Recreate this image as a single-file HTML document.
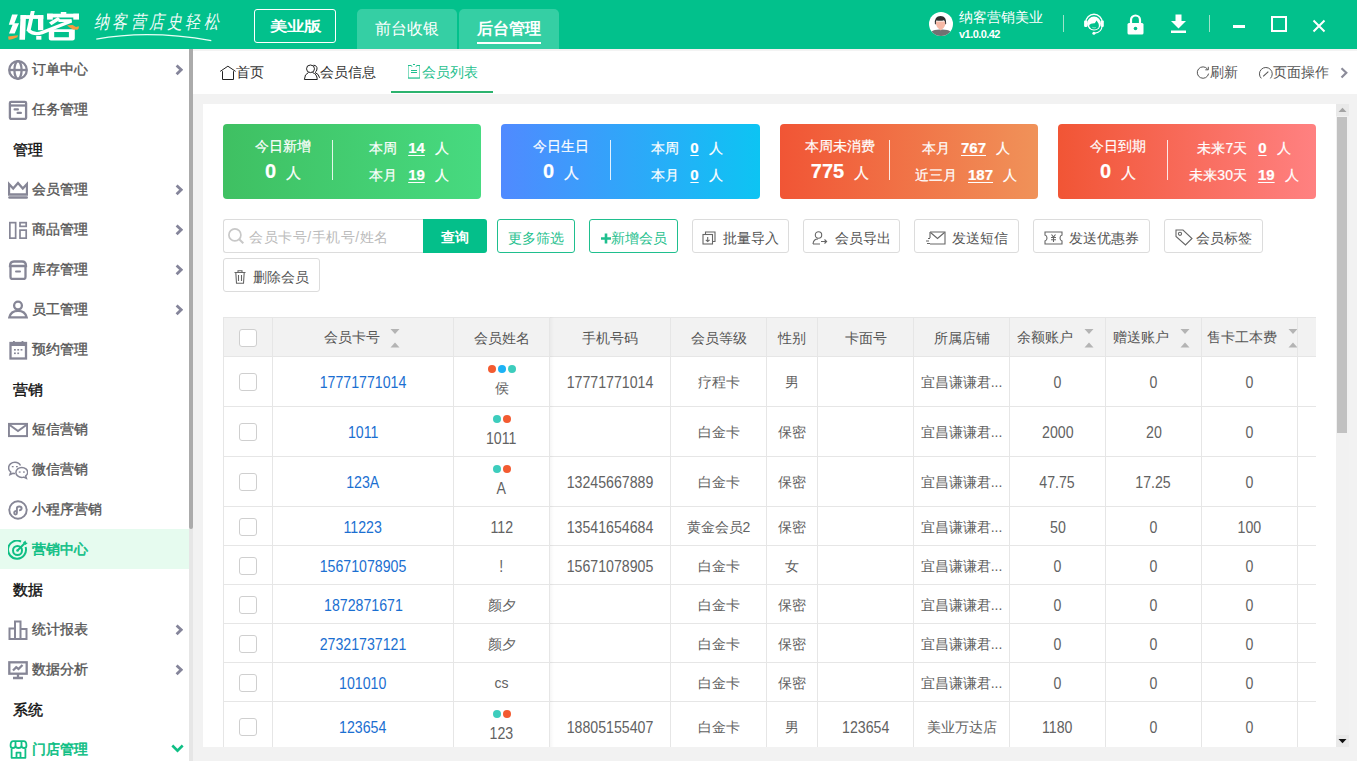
<!DOCTYPE html>
<html><head><meta charset="utf-8">
<style>
*{box-sizing:border-box;margin:0;padding:0}
html,body{width:1357px;height:761px;overflow:hidden;background:#f2f2f2;font-family:"Liberation Sans",sans-serif;font-size:14px;color:#333}
.a{position:absolute}
#hdr{position:absolute;left:0;top:0;width:1357px;height:49px;background:#02c18c}
.htab{position:absolute;top:9px;height:40px;width:100px;background:#35cfa4;border-radius:5px 5px 0 0;color:#fff;font-size:16px;text-align:center;line-height:20px;padding-top:10px}
#side{position:absolute;left:0;top:49px;width:189px;height:712px;background:#fff}
#sscroll{position:absolute;left:189px;top:49px;width:4px;height:712px;background:#e6e6e6}
#sthumb{position:absolute;left:189px;top:49px;width:4px;height:480px;background:#ababab;border-radius:0 0 2px 2px}
.si{position:absolute;left:0;width:189px;height:40px}
.si .t{position:absolute;left:32px;top:0;line-height:40px;font-size:14px;color:#555;-webkit-text-stroke:0.35px #555}
.si .ic{position:absolute;left:8px;top:11px;width:20px;height:20px}
.si .ch{position:absolute;left:175px;top:15px;width:8px;height:12px}
.si.act{background:#e6fbef}.si.act .t,.si.grn .t{color:#0fbf85;-webkit-text-stroke:0.6px #0fbf85}
.sh{position:absolute;left:13px;padding-top:1px;width:150px;height:40px;line-height:40px;font-size:15px;color:#111;-webkit-text-stroke:0.4px #111}
#tabs{position:absolute;left:193px;top:49px;width:1164px;height:45px;background:#fff;border-top:1px solid #f6f0f2;box-shadow:inset 0 1px 0 #f3f3f3}
#panel{position:absolute;left:203px;top:104px;width:1133px;height:643px;background:#fff;overflow:hidden}
.card{position:absolute;top:20px;height:75px;width:258px;border-radius:4px;color:#fff;-webkit-text-stroke:0.2px #fff}
.ct{position:absolute;left:0;width:120px;top:13px;text-align:center;font-size:14px;line-height:18px}
.cn{position:absolute;left:0;width:120px;top:35px;text-align:center;line-height:24px}
.cn b{font-size:20px;font-weight:bold}.cn span{font-size:15px;margin-left:10px}
.cd{position:absolute;left:109px;top:16px;width:1px;height:40px;background:rgba(255,255,255,.85)}
.cr{position:absolute;left:110px;width:152px;margin-top:1px;text-align:center;font-size:14px;line-height:18px}
.cr u{font-weight:bold;font-size:15px;margin:0 10px 0 11px;text-decoration-thickness:1px;text-underline-offset:2px}
.hl{left:0;width:1100px;height:1px;background:#e6e6e6}
.vl{top:0;width:1px;height:440px;background:#e6e6e6}
.th,.td{text-align:center;font-size:14px;color:#626262;white-space:nowrap;overflow:hidden}
.th{color:#555}
.lk{color:#1b6fd1}
.cb{display:inline-block;width:18px;height:18px;border:1px solid #cfcfcf;border-radius:3px;background:#fff;vertical-align:middle}
.dots{height:10px;margin-top:8px;font-size:0;line-height:0}
.dots i{display:inline-block;width:8px;height:8px;border-radius:50%;margin:0 1px}
.nm{line-height:18px;margin-top:4px}
.num{display:inline-block;font-size:16px;transform:scaleX(.885);line-height:normal;vertical-align:-1px}
.srt{display:block}
.btn{position:absolute;top:115px;height:34px;border:1px solid #dcdcdc;border-radius:3px;color:#555;font-size:14px;line-height:32px;padding-top:2px;background:#fff}
.gbtn{border-color:#1fbf8e;color:#1fbf8e}
</style></head><body>

<div id="hdr">
  <!-- logo -->
  <svg class="a" style="left:0;top:0" width="90" height="48" viewBox="0 0 90 48">
    <g fill="#fff">
      <path d="M12.1,14.4 H17.8 L14.4,23.2 H19 L14.7,33.5 H9 L12.6,24.8 H8.8 Z"/>
      <path d="M20.6,15.1 H26 L25,39.7 H19.4 Z"/>
      <path d="M20.6,15.1 H43.3 V18.9 H20.6 Z"/>
      <path d="M38,15.1 H43.3 V30.2 H38 Z"/>
      <path d="M30.8,11 H34.8 L30.5,31 H26.5 Z"/>
      <rect x="36.2" y="35.9" width="5.2" height="3.8"/>
      <rect x="60.8" y="12" width="5.5" height="3"/>
      <rect x="47.1" y="13.7" width="31.9" height="3.8"/>
      <rect x="47.1" y="13.7" width="5.7" height="5.9"/>
      <rect x="73.3" y="13.7" width="5.7" height="5.9"/>
      <path d="M49,22.6 L58,17 L60.4,19.5 L51.4,25.2 Z"/>
      <path d="M58.4,19.2 H71.7 V22 H58.4 Z"/>
      <path d="M48.8,29.3 H74.8 V38.5 Q74.8,40.6 72.5,40.6 H51 Q48.8,40.6 48.8,38.5 Z M54.2,32.1 V37.3 H68.9 V32.1 Z" fill-rule="evenodd"/>
    </g>
    <path d="M71.5,21 L42,32.6 Q34.5,35.4 28.3,30.4" stroke="#fff" stroke-width="3.3" fill="none"/>
    <g fill="#f59a3e">
      <path d="M8.1,36.4 L18,35.3 L17.4,37.3 L12,39.3 L8.6,39.8 Z"/>
      <path d="M67,25.3 L72.6,25 L76,26.9 L78.8,26.2 L78.8,28.3 L77.4,29.8 L73.1,29.5 L68.9,26.9 Z"/>
    </g>
  </svg>
  <!-- slogan -->
  <div class="a" style="left:94px;top:10px;font-family:'Liberation Serif',serif;font-style:italic;color:#fff;font-size:15px;letter-spacing:3.3px;line-height:20px;transform:scaleY(1.22);transform-origin:0 0;opacity:.95">纳客营店史轻松</div>
  <svg class="a" style="left:93px;top:30px" width="130" height="12"><path d="M3.3,9.2 Q55,-0.5 118.3,10.6" stroke="#e8fff6" stroke-width="1.3" fill="none"/></svg>
  <!-- 美业版 -->
  <div class="a" style="left:254px;top:9px;width:82px;height:34px;border:1px solid #fff;border-radius:3px;color:#fff;font-size:17px;font-weight:bold;text-align:center;line-height:31px"><div style="transform:scaleY(.8);transform-origin:50% 60%">美业版</div></div>
  <div class="htab" style="left:357px">前台收银</div>
  <div class="htab" style="left:459px;font-weight:bold"><span style="border-bottom:2px solid #fff;padding-bottom:5px">后台管理</span></div>
  <!-- user -->
  <svg class="a" style="left:929px;top:12px" width="24" height="24" viewBox="0 0 24 24">
    <circle cx="12" cy="12" r="12" fill="#fff"/>
    <clipPath id="cc"><circle cx="12" cy="12" r="12"/></clipPath>
    <g clip-path="url(#cc)">
      <path d="M3,19.2 Q5,17.6 10.5,17.6 H13.5 Q19,17.6 21,19.2 V25 H3 Z" fill="#727272"/>
      <path d="M6.8,9.5 Q6.7,15.5 10.5,17.2 L11.8,18.6 L13,17.2 Q16.6,15.5 16.6,9.5 Z" fill="#f6b9a6"/>
      <path d="M5.9,12 Q5.2,4 11.6,4 Q17.6,4 17.2,11.8 L16.3,12.5 Q16.4,9 15,8.3 Q12,9.2 7.2,8.5 Q6.8,10 6.9,12.5 Z" fill="#2f2f2f"/>
    </g>
  </svg>
  <div class="a" style="left:959px;top:9px;color:#fff;font-size:14px;line-height:16px">纳客营销美业</div>
  <div class="a" style="left:959px;top:28px;color:#fff;font-size:11px;font-weight:bold;line-height:13px;letter-spacing:-0.55px">v1.0.0.42</div>
  <div class="a" style="left:1063px;top:15px;width:1px;height:17px;background:#9ee3c9"></div>
  <!-- headset -->
  <svg class="a" style="left:1083px;top:12px" width="22" height="23" viewBox="0 0 22 23">
    <path d="M2.7,10.5 A8.3,8.3 0 0 1 19.3,10.5" stroke="#fff" stroke-width="1.4" fill="none"/>
    <rect x="1.1" y="8.6" width="3.3" height="6.3" rx="0.8" fill="#fff"/>
    <rect x="17.8" y="8.6" width="3" height="6.3" rx="0.8" fill="#fff"/>
    <circle cx="11" cy="11.6" r="7" fill="#fff"/>
    <path d="M6.3,13 Q7.5,11 11.8,11.2 L13.6,8.6 L15.6,11.8 Q16.4,14.2 15.3,16 Q13.3,17.6 11,17.5 Q7.4,17.3 6.3,14.6 Z" fill="#02c18c"/>
    <path d="M9.3,15.3 Q11,16.3 12.8,15.5" stroke="#fff" stroke-width="0.7" fill="none" opacity=".7"/>
    <path d="M19,14.5 Q18.6,20.3 11.5,21.1" stroke="#fff" stroke-width="1.2" fill="none"/>
    <circle cx="10.9" cy="21.2" r="1.5" fill="#fff"/>
  </svg>
  <!-- lock -->
  <svg class="a" style="left:1127px;top:14px" width="17" height="21" viewBox="0 0 17 21">
    <path d="M4,9 V6 A4.5,4.5 0 0 1 13,6 V9" stroke="#fff" stroke-width="2.2" fill="none"/>
    <rect x="0.5" y="9" width="16" height="11.5" rx="1.5" fill="#fff"/>
    <circle cx="8.5" cy="14.5" r="1.8" fill="#03bf8b"/>
  </svg>
  <!-- download -->
  <svg class="a" style="left:1170px;top:14px" width="17" height="20" viewBox="0 0 17 20">
    <rect x="5.5" y="0.5" width="6" height="7" fill="#fff"/>
    <path d="M1,7 H16 L8.5,14.5 Z" fill="#fff"/>
    <rect x="1" y="16.5" width="15" height="2.5" fill="#fff"/>
  </svg>
  <div class="a" style="left:1209px;top:15px;width:1px;height:17px;background:#9ee3c9"></div>
  <div class="a" style="left:1233px;top:25px;width:12px;height:3px;background:#fff"></div>
  <div class="a" style="left:1271px;top:16px;width:16px;height:16px;border:2px solid #fff"></div>
  <svg class="a" style="left:1312px;top:19px" width="14" height="14" viewBox="0 0 14 14"><path d="M1.5,1.5 L12.5,12.5 M12.5,1.5 L1.5,12.5" stroke="#fff" stroke-width="2"/></svg>
</div>

<div id="side">
<div class="si" style="top:0px"><svg class="ic" viewBox="0 0 20 20"><g stroke="#868696" stroke-width="2.3" fill="none"><circle cx="10" cy="10" r="8.8"/><ellipse cx="10" cy="10" rx="3.6" ry="8.8"/><path d="M1.2,10 H18.8"/></g></svg><div class="t">订单中心</div><svg class="ch" viewBox="0 0 8 12"><path d="M1.6,1.4 L6.2,5.8 L1.6,10.2" stroke="#85859a" stroke-width="2.8" fill="none"/></svg></div>
<div class="si" style="top:40px"><svg class="ic" viewBox="0 0 20 20"><g stroke="#868696" fill="none"><rect x="1.9" y="1.9" width="16.2" height="17" rx="1.2" stroke-width="2.3"/><path d="M1.9,5.5 H18.1" stroke-width="2.3"/></g><g fill="#868696"><rect x="5.5" y="8.3" width="5.5" height="2.2" rx="1.1"/><rect x="8.5" y="11.8" width="5.5" height="2.2" rx="1.1"/></g></svg><div class="t">任务管理</div></div>
<div class="sh" style="top:80px">管理</div>
<div class="si" style="top:120px"><svg class="ic" viewBox="0 0 20 20"><path d="M1,4 L5.2,8.5 L10,3 L14.8,8.5 L19,4 V14.5 H1 Z" stroke="#868696" stroke-width="2.3" fill="none" stroke-linejoin="miter"/><rect x="0.2" y="16.2" width="19.8" height="2.6" rx="1.3" fill="#868696"/></svg><div class="t">会员管理</div><svg class="ch" viewBox="0 0 8 12"><path d="M1.6,1.4 L6.2,5.8 L1.6,10.2" stroke="#85859a" stroke-width="2.8" fill="none"/></svg></div>
<div class="si" style="top:160px"><svg class="ic" viewBox="0 0 20 20"><g stroke="#868696" stroke-width="1.7" fill="none"><rect x="1.85" y="2.65" width="5.8" height="15.5"/><rect x="12" y="2.65" width="6.2" height="3.7"/><rect x="12" y="10.15" width="6.2" height="8"/></g></svg><div class="t">商品管理</div><svg class="ch" viewBox="0 0 8 12"><path d="M1.6,1.4 L6.2,5.8 L1.6,10.2" stroke="#85859a" stroke-width="2.8" fill="none"/></svg></div>
<div class="si" style="top:200px"><svg class="ic" viewBox="0 0 20 20"><g stroke="#868696" stroke-width="2.3" fill="none"><path d="M2,6 Q2,1.5 6,1.5 H14 Q18,1.5 18,6 Z"/><path d="M2.5,6 V17 Q2.5,19 4.5,19 H15.5 Q17.5,19 17.5,17 V6"/></g><rect x="7" y="10.5" width="6" height="2" rx="1" fill="#868696"/></svg><div class="t">库存管理</div><svg class="ch" viewBox="0 0 8 12"><path d="M1.6,1.4 L6.2,5.8 L1.6,10.2" stroke="#85859a" stroke-width="2.8" fill="none"/></svg></div>
<div class="si" style="top:240px"><svg class="ic" viewBox="0 0 20 20"><g stroke="#868696" stroke-width="2.3" fill="none"><circle cx="10" cy="5.6" r="3.9"/><path d="M1.3,17.4 Q2.8,10.8 10,10.8 Q17.2,10.8 18.7,17.4 Z"/></g></svg><div class="t">员工管理</div><svg class="ch" viewBox="0 0 8 12"><path d="M1.6,1.4 L6.2,5.8 L1.6,10.2" stroke="#85859a" stroke-width="2.8" fill="none"/></svg></div>
<div class="si" style="top:280px"><svg class="ic" viewBox="0 0 20 20"><g stroke="#868696" fill="none"><rect x="2.5" y="3" width="15.5" height="15.5" stroke-width="2.3"/></g><rect x="2" y="2.8" width="16.5" height="3.2" fill="#868696"/><rect x="5" y="1" width="1.8" height="3" fill="#868696"/><rect x="13.6" y="1" width="1.8" height="3" fill="#868696"/><g fill="#868696"><rect x="6" y="9" width="1.8" height="1.6"/><rect x="9.3" y="9" width="1.8" height="1.6"/><rect x="12.6" y="9" width="1.8" height="1.6"/><rect x="6" y="12.5" width="1.8" height="1.6"/><rect x="9.3" y="12.5" width="1.8" height="1.6"/></g></svg><div class="t">预约管理</div></div>
<div class="sh" style="top:320px">营销</div>
<div class="si" style="top:360px"><svg class="ic" viewBox="0 0 20 20"><g stroke="#868696" stroke-width="2" fill="none"><rect x="0.9" y="3.9" width="18.2" height="12.2"/><path d="M1,4.5 L10,11 L19,4.5"/></g></svg><div class="t">短信营销</div></div>
<div class="si" style="top:400px"><svg class="ic" viewBox="0 0 20 20"><g stroke="#868696" stroke-width="1.5" fill="none"><path d="M12.5,5.5 C11.5,3.6 9.4,2.3 7,2.3 C3.4,2.3 0.6,4.8 0.6,7.9 C0.6,9.6 1.4,11 2.8,12 L2,14.6 L4.9,13.2 C5.6,13.4 6.3,13.5 7,13.5"/><path d="M13.8,7.4 C10.6,7.4 7.9,9.6 7.9,12.4 C7.9,15.2 10.6,17.4 13.8,17.4 C14.5,17.4 15.2,17.3 15.8,17.1 L18.4,18.3 L17.7,15.9 C18.9,15 19.7,13.8 19.7,12.4 C19.7,9.6 17,7.4 13.8,7.4 Z"/></g><g fill="#868696"><rect x="3.8" y="6" width="1.8" height="1.3"/><rect x="8" y="6" width="1.8" height="1.3"/><rect x="10.8" y="11.4" width="1.8" height="1.3"/><rect x="15" y="11.4" width="1.8" height="1.3"/></g></svg><div class="t">微信营销</div></div>
<div class="si" style="top:440px"><svg class="ic" viewBox="0 0 20 20"><g stroke="#868696" stroke-width="1.9" fill="none"><circle cx="10" cy="10" r="8.7"/><path d="M6.2,13 C6.2,15 8.9,15 8.9,13 V8.3 C8.9,5.9 13.6,5.9 13.6,8.3 C13.6,10.4 11.3,10.4 11.1,10.4"/><path d="M8.9,11 C6.4,10.8 6.2,12.2 6.2,13"/></g></svg><div class="t">小程序营销</div></div>
<div class="si act" style="top:480px"><svg class="ic" viewBox="0 0 20 20"><g stroke="#0fbf85" stroke-width="2" fill="none"><path d="M17.6,7 A9,9 0 1 1 13,1.6"/><circle cx="9.5" cy="10.5" r="4.5"/><path d="M9.5,10.5 L16.5,3.5"/></g><path d="M15,2.5 L17.5,0.5 L18,2.5 L19.8,3 L17.5,5 Z" fill="#0fbf85"/><circle cx="9.5" cy="10.5" r="1.3" fill="#0fbf85"/></svg><div class="t">营销中心</div></div>
<div class="sh" style="top:520px">数据</div>
<div class="si" style="top:560px"><svg class="ic" viewBox="0 0 20 20"><g stroke="#868696" stroke-width="2" fill="none"><path d="M1.5,19 V8.5 H7 V19 Z"/><path d="M7,19 V1.5 H12.5 V19"/><path d="M12.5,9 H18.5 V19 H1.5"/></g></svg><div class="t">统计报表</div><svg class="ch" viewBox="0 0 8 12"><path d="M1.6,1.4 L6.2,5.8 L1.6,10.2" stroke="#85859a" stroke-width="2.8" fill="none"/></svg></div>
<div class="si" style="top:600px"><svg class="ic" viewBox="0 0 20 20"><g stroke="#868696" stroke-width="2.3" fill="none"><rect x="1.3" y="2.3" width="17.4" height="11.4"/><path d="M5,10.5 L8.2,7.2 L10.5,9 L14.5,5"/><path d="M10,13.7 V17.5 M5,18 H15"/></g></svg><div class="t">数据分析</div><svg class="ch" viewBox="0 0 8 12"><path d="M1.6,1.4 L6.2,5.8 L1.6,10.2" stroke="#85859a" stroke-width="2.8" fill="none"/></svg></div>
<div class="sh" style="top:640px">系统</div>
<div class="si grn" style="top:680px"><svg class="ic" viewBox="0 0 20 20"><g stroke="#0fbf85" stroke-width="1.8" fill="none" stroke-linejoin="round"><path d="M2.6,5 Q2.6,1.2 5.4,1.2 H15.6 Q18.4,1.2 18.4,5 V6 Q18.4,8 16.1,8 Q13.8,8 13.5,6.2 Q13.2,8 10.5,8 Q7.8,8 7.5,6.2 Q7.2,8 4.9,8 Q2.6,8 2.6,6 Z"/><path d="M3.6,8.5 V17.8 H17.4 V8.5"/><path d="M8.5,17.8 V12.6 H12.5 V17.8"/><path d="M7.5,1.5 V6.2 M13.5,1.5 V6.2"/></g></svg><div class="t">门店管理</div><svg class="a" style="left:171px;top:15px" width="13" height="9" viewBox="0 0 13 9"><path d="M1.3,1.5 L6.5,6.6 L11.7,1.5" stroke="#0fbf85" stroke-width="2.6" fill="none"/></svg></div>

</div>
<div id="sscroll"></div><div id="sthumb"></div>

<div id="tabs">
  <svg class="a" style="left:26px;top:15px" width="18" height="16" viewBox="0 0 18 16"><path d="M1.2,6.4 L8.9,1.2 L16.6,6.4" stroke="#222" stroke-width="1" fill="none"/><path d="M3.5,6.2 V14.5 H14.5 V6.2" stroke="#222" stroke-width="1" fill="none"/></svg>
  <div class="a" style="left:43px;top:13px;font-size:14px;color:#333;line-height:18px">首页</div>
  <svg class="a" style="left:110px;top:14px" width="18" height="17" viewBox="0 0 18 17"><g stroke="#222" stroke-width="1" fill="none"><ellipse cx="7.5" cy="4.8" rx="4" ry="3.8"/><path d="M5.5,8.5 Q1.5,10 1.4,15.5 H14.3 Q14,10 9.5,8.5"/><path d="M10.5,1.2 Q14.3,1.5 14,5 Q13.8,7.5 12,8.5 Q16,10 16.6,13.8"/></g></svg>
  <div class="a" style="left:127px;top:13px;font-size:14px;color:#333;line-height:18px">会员信息</div>
  <svg class="a" style="left:214px;top:13px" width="14" height="16" viewBox="0 0 14 16"><g stroke="#1fbf8e" fill="none"><path d="M1.5,2.5 V15.2 H12.5 V2.5" stroke-width="0.9" stroke-opacity=".6"/><path d="M1,2.5 H4.3 M9.7,2.5 H13 M1,15 H13 M4,7.5 H10 M4,9.5 H10" stroke-width="1.1"/><path d="M4.3,2.5 L5,3.8 M9.7,2.5 L9,3.8 M6,1.5 H8" stroke-width="1"/></g></svg>
  <div class="a" style="left:229px;top:13px;font-size:14px;color:#1fbf8e;line-height:18px">会员列表</div>
  <div class="a" style="left:198px;top:41px;width:102px;height:2px;background:#2cb36e"></div>
  <svg class="a" style="left:1003px;top:16px" width="15" height="14" viewBox="0 0 15 14"><path d="M11.6,3.2 A5.7,5.7 0 1 0 12.6,7.6" stroke="#555" stroke-width="1" fill="none"/><path d="M12.3,0.8 V3.8 H9.3" stroke="#555" stroke-width="1" fill="none"/></svg>
  <div class="a" style="left:1017px;top:13px;font-size:14px;color:#555;line-height:18px">刷新</div>
  <svg class="a" style="left:1065px;top:16px" width="16" height="14" viewBox="0 0 16 14"><path d="M3.3,12.4 A6.4,6.4 0 1 1 12.4,12.4" stroke="#555" stroke-width="1" fill="none"/><path d="M5.2,10.3 L10.3,5.6" stroke="#555" stroke-width="1.1"/></svg>
  <div class="a" style="left:1080px;top:13px;font-size:14px;color:#555;line-height:18px">页面操作</div>
  <svg class="a" style="left:1147px;top:17px" width="8" height="12" viewBox="0 0 8 12"><path d="M1.5,1.2 L6.3,5.8 L1.5,10.5" stroke="#8c8c9a" stroke-width="2.2" fill="none"/></svg>
</div>

<div id="panel">
<div class="card" style="left:20px;width:258px;background:linear-gradient(90deg,#3fc062,#47da80)"><div class="ct">今日新增</div><div class="cn"><b>0</b><span>人</span></div><div class="cd"></div><div class="cr" style="top:14px">本周<u>14</u><span>人</span></div><div class="cr" style="top:41px">本月<u>19</u><span>人</span></div></div>
<div class="card" style="left:298px;width:259px;background:linear-gradient(90deg,#508aff,#0dc4f3)"><div class="ct">今日生日</div><div class="cn"><b>0</b><span>人</span></div><div class="cd"></div><div class="cr" style="top:14px">本周<u>0</u><span>人</span></div><div class="cr" style="top:41px">本月<u>0</u><span>人</span></div></div>
<div class="card" style="left:577px;width:258px;background:linear-gradient(90deg,#f15535,#f09259)"><div class="ct">本周未消费</div><div class="cn"><b>775</b><span>人</span></div><div class="cd"></div><div class="cr" style="top:14px">本月<u>767</u><span>人</span></div><div class="cr" style="top:41px">近三月<u>187</u><span>人</span></div></div>
<div class="card" style="left:855px;width:258px;background:linear-gradient(90deg,#f15535,#ff8181)"><div class="ct">今日到期</div><div class="cn"><b>0</b><span>人</span></div><div class="cd"></div><div class="cr" style="top:14px">未来7天<u>0</u><span>人</span></div><div class="cr" style="top:41px">未来30天<u>19</u><span>人</span></div></div>
<div class="a" style="left:20px;top:115px;width:201px;height:34px;border:1px solid #dcdcdc;border-right:0;border-radius:3px 0 0 3px"></div>
<svg class="a" style="left:25px;top:124px" width="16" height="16" viewBox="0 0 16 16"><circle cx="6.9" cy="6.9" r="6" stroke="#c8c8c8" stroke-width="1.7" fill="none"/><path d="M11.2,11.2 L15.3,15.3" stroke="#c8c8c8" stroke-width="2"/></svg>
<div class="a" style="left:46px;top:124px;font-size:14px;color:#bbb;line-height:18px;letter-spacing:0.55px">会员卡号/手机号/姓名</div>
<div class="a" style="left:220px;top:115px;width:64px;height:34px;background:#04bf8a;border-radius:0 3px 3px 0;color:#fff;font-weight:bold;text-align:center;line-height:36px">查询</div>
<div class="btn gbtn" style="left:294px;width:78px;text-align:center">更多筛选</div>
<div class="btn gbtn" style="left:386px;width:89px;text-align:center"><svg width="10" height="11" viewBox="0 0 10 11" style="vertical-align:-1px"><path d="M0,5.5 H10 M5,0.5 V10.5" stroke="#1fbf8e" stroke-width="2.6"/></svg>新增会员</div>
<div class="btn" style="left:489px;width:97px;text-align:center"><svg width="14" height="14" viewBox="0 0 14 14" style="vertical-align:-2px;margin-right:7px"><g stroke="#666" stroke-width="1.1" fill="none"><path d="M3.5,3.5 V1 H13 V10.5 H10.5"/><rect x="1" y="3.5" width="9.5" height="9.5"/><path d="M5.7,6 V10.5 M3.8,8.8 L5.7,10.6 L7.6,8.8"/></g></svg>批量导入</div>
<div class="btn" style="left:600px;width:97px;text-align:center"><svg width="16" height="14" viewBox="0 0 16 14" style="vertical-align:-2px;margin-right:7px"><g stroke="#666" stroke-width="1.1" fill="none"><circle cx="6.5" cy="4" r="3.2"/><path d="M1,13 Q1.5,8 6,8 M9,10.5 H14.5 M12.5,8.5 L14.6,10.5 L12.5,12.5 M1,13 H8"/></g></svg>会员导出</div>
<div class="btn" style="left:711px;width:105px;text-align:center"><svg width="20" height="14" viewBox="0 0 20 14" style="vertical-align:-2px;margin-right:6px"><g stroke="#666" stroke-width="1.1" fill="none"><path d="M4,1 H19 V13 H4 M4,1 V7"/><path d="M4.5,1.5 L11.5,7.5 L18.5,1.5"/><path d="M0,10 H3 M1,12.5 H4 M2,7.5 H4"/></g></svg>发送短信</div>
<div class="btn" style="left:830px;width:117px;text-align:center"><svg width="19" height="14" viewBox="0 0 19 14" style="vertical-align:-2px;margin-right:6px"><g stroke="#666" stroke-width="1.1" fill="none"><path d="M1,1 H18 V4 Q16,4.5 16,7 Q16,9.5 18,10 V13 H1 V10 Q3,9.5 3,7 Q3,4.5 1,4 Z"/><path d="M7.5,3.5 L9.5,6 L11.5,3.5 M7,6.5 H12 M7,8.8 H12 M9.5,6 V11"/></g></svg>发送优惠券</div>
<div class="btn" style="left:961px;width:99px;text-align:center"><svg width="18" height="17" viewBox="0 0 18 17" style="vertical-align:-3px;margin-right:3px"><g stroke="#666" stroke-width="1.1" fill="none"><path d="M1,1 H8 L17,9.5 L10.5,16 L1,7.5 Z"/><circle cx="5" cy="4.8" r="1.6"/></g></svg>会员标签</div>
<div class="btn" style="left:20px;top:154px;width:97px;text-align:center"><svg width="12" height="14" viewBox="0 0 12 14" style="vertical-align:-2px;margin-right:7px"><g stroke="#666" stroke-width="1.1" fill="none"><path d="M0.5,2.5 H11.5 M4,2.5 V0.8 H8 V2.5 M1.8,2.5 L2.5,13.3 H9.5 L10.2,2.5 M4.5,5 V11 M7.5,5 V11"/></g></svg>删除会员</div>
<div class="a" style="left:20px;top:213px;width:1093px;height:430px;overflow:hidden"><div class="a" style="left:0;top:0;width:1100px;height:39px;background:#f2f2f2"></div>
<div class="a hl" style="top:0px"></div>
<div class="a hl" style="top:39px"></div>
<div class="a hl" style="top:89px"></div>
<div class="a hl" style="top:139px"></div>
<div class="a hl" style="top:189px"></div>
<div class="a hl" style="top:228px"></div>
<div class="a hl" style="top:267px"></div>
<div class="a hl" style="top:306px"></div>
<div class="a hl" style="top:345px"></div>
<div class="a hl" style="top:384px"></div>
<div class="a vl" style="left:0px"></div>
<div class="a vl" style="left:49px"></div>
<div class="a vl" style="left:230px"></div>
<div class="a vl" style="left:326px"></div>
<div class="a vl" style="left:447px"></div>
<div class="a vl" style="left:543px"></div>
<div class="a vl" style="left:594px"></div>
<div class="a vl" style="left:690px"></div>
<div class="a vl" style="left:786px"></div>
<div class="a vl" style="left:882px"></div>
<div class="a vl" style="left:978px"></div>
<div class="a vl" style="left:1074px"></div>
<div class="a" style="left:327px;top:0;width:4px;height:440px;background:linear-gradient(90deg,rgba(0,0,0,.035),rgba(0,0,0,0))"></div>
<div class="a th" style="left:1px;top:1px;width:48px;height:38px;line-height:38px;"><span class="cb"></span></div>
<div class="a th" style="left:101px;top:1px;line-height:38px">会员卡号</div>
<div class="a" style="left:167px;top:12px"><svg class="srt" width="10" height="19" viewBox="0 0 10 19"><path d="M0.5,0 H9.5 L5,5 Z M0.5,18.5 H9.5 L5,13.5 Z" fill="#b4b4b4"/></svg></div>
<div class="a th" style="left:231px;top:2px;width:95px;height:38px;line-height:38px;">会员姓名</div>
<div class="a th" style="left:327px;top:2px;width:120px;height:38px;line-height:38px;">手机号码</div>
<div class="a th" style="left:448px;top:2px;width:95px;height:38px;line-height:38px;">会员等级</div>
<div class="a th" style="left:544px;top:2px;width:50px;height:38px;line-height:38px;">性别</div>
<div class="a th" style="left:595px;top:2px;width:95px;height:38px;line-height:38px;">卡面号</div>
<div class="a th" style="left:691px;top:2px;width:95px;height:38px;line-height:38px;">所属店铺</div>
<div class="a th" style="left:794px;top:1px;line-height:38px">余额账户</div>
<div class="a" style="left:861px;top:12px;width:21px;overflow:hidden"><svg class="srt" width="10" height="19" viewBox="0 0 10 19"><path d="M0.5,0 H9.5 L5,5 Z M0.5,18.5 H9.5 L5,13.5 Z" fill="#b4b4b4"/></svg></div>
<div class="a th" style="left:890px;top:1px;line-height:38px">赠送账户</div>
<div class="a" style="left:957px;top:12px;width:21px;overflow:hidden"><svg class="srt" width="10" height="19" viewBox="0 0 10 19"><path d="M0.5,0 H9.5 L5,5 Z M0.5,18.5 H9.5 L5,13.5 Z" fill="#b4b4b4"/></svg></div>
<div class="a th" style="left:984px;top:1px;line-height:38px">售卡工本费</div>
<div class="a" style="left:1065px;top:12px;width:9px;overflow:hidden"><svg class="srt" width="10" height="19" viewBox="0 0 10 19"><path d="M0.5,0 H9.5 L5,5 Z M0.5,18.5 H9.5 L5,13.5 Z" fill="#b4b4b4"/></svg></div>
<div class="a td" style="left:1px;top:40px;width:48px;height:49px;line-height:49px;"><span class="cb"></span></div>
<div class="a td lk" style="left:50px;top:41px;width:180px;height:49px;line-height:49px;"><span class="num">17771771014</span></div>
<div class="a td" style="left:231px;top:40px;width:95px;height:49px;line-height:49px;line-height:normal"><div class="dots"><i style="background:#f35b31"></i><i style="background:#1cb2f5"></i><i style="background:#3dcdbd"></i></div><div class="nm">侯</div></div>
<div class="a td" style="left:327px;top:41px;width:120px;height:49px;line-height:49px;"><span class="num">17771771014</span></div>
<div class="a td" style="left:448px;top:41px;width:95px;height:49px;line-height:49px;">疗程卡</div>
<div class="a td" style="left:544px;top:41px;width:50px;height:49px;line-height:49px;">男</div>
<div class="a td" style="left:595px;top:41px;width:95px;height:49px;line-height:49px;"></div>
<div class="a td" style="left:691px;top:41px;width:95px;height:49px;line-height:49px;">宜昌谦谦君...</div>
<div class="a td" style="left:787px;top:41px;width:95px;height:49px;line-height:49px;"><span class="num">0</span></div>
<div class="a td" style="left:883px;top:41px;width:95px;height:49px;line-height:49px;"><span class="num">0</span></div>
<div class="a td" style="left:979px;top:41px;width:95px;height:49px;line-height:49px;"><span class="num">0</span></div>
<div class="a td" style="left:1px;top:90px;width:48px;height:49px;line-height:49px;"><span class="cb"></span></div>
<div class="a td lk" style="left:50px;top:91px;width:180px;height:49px;line-height:49px;"><span class="num">1011</span></div>
<div class="a td" style="left:231px;top:90px;width:95px;height:49px;line-height:49px;line-height:normal"><div class="dots"><i style="background:#3dcdbd"></i><i style="background:#f35b31"></i></div><div class="nm"><span class="num">1011</span></div></div>
<div class="a td" style="left:327px;top:91px;width:120px;height:49px;line-height:49px;"></div>
<div class="a td" style="left:448px;top:91px;width:95px;height:49px;line-height:49px;">白金卡</div>
<div class="a td" style="left:544px;top:91px;width:50px;height:49px;line-height:49px;">保密</div>
<div class="a td" style="left:595px;top:91px;width:95px;height:49px;line-height:49px;"></div>
<div class="a td" style="left:691px;top:91px;width:95px;height:49px;line-height:49px;">宜昌谦谦君...</div>
<div class="a td" style="left:787px;top:91px;width:95px;height:49px;line-height:49px;"><span class="num">2000</span></div>
<div class="a td" style="left:883px;top:91px;width:95px;height:49px;line-height:49px;"><span class="num">20</span></div>
<div class="a td" style="left:979px;top:91px;width:95px;height:49px;line-height:49px;"><span class="num">0</span></div>
<div class="a td" style="left:1px;top:140px;width:48px;height:49px;line-height:49px;"><span class="cb"></span></div>
<div class="a td lk" style="left:50px;top:141px;width:180px;height:49px;line-height:49px;"><span class="num">123A</span></div>
<div class="a td" style="left:231px;top:140px;width:95px;height:49px;line-height:49px;line-height:normal"><div class="dots"><i style="background:#3dcdbd"></i><i style="background:#f35b31"></i></div><div class="nm"><span class="num">A</span></div></div>
<div class="a td" style="left:327px;top:141px;width:120px;height:49px;line-height:49px;"><span class="num">13245667889</span></div>
<div class="a td" style="left:448px;top:141px;width:95px;height:49px;line-height:49px;">白金卡</div>
<div class="a td" style="left:544px;top:141px;width:50px;height:49px;line-height:49px;">保密</div>
<div class="a td" style="left:595px;top:141px;width:95px;height:49px;line-height:49px;"></div>
<div class="a td" style="left:691px;top:141px;width:95px;height:49px;line-height:49px;">宜昌谦谦君...</div>
<div class="a td" style="left:787px;top:141px;width:95px;height:49px;line-height:49px;"><span class="num">47.75</span></div>
<div class="a td" style="left:883px;top:141px;width:95px;height:49px;line-height:49px;"><span class="num">17.25</span></div>
<div class="a td" style="left:979px;top:141px;width:95px;height:49px;line-height:49px;"><span class="num">0</span></div>
<div class="a td" style="left:1px;top:190px;width:48px;height:38px;line-height:38px;"><span class="cb"></span></div>
<div class="a td lk" style="left:50px;top:191px;width:180px;height:38px;line-height:38px;"><span class="num">11223</span></div>
<div class="a td" style="left:231px;top:191px;width:95px;height:38px;line-height:38px;"><span class="num">112</span></div>
<div class="a td" style="left:327px;top:191px;width:120px;height:38px;line-height:38px;"><span class="num">13541654684</span></div>
<div class="a td" style="left:448px;top:191px;width:95px;height:38px;line-height:38px;">黄金会员2</div>
<div class="a td" style="left:544px;top:191px;width:50px;height:38px;line-height:38px;">保密</div>
<div class="a td" style="left:595px;top:191px;width:95px;height:38px;line-height:38px;"></div>
<div class="a td" style="left:691px;top:191px;width:95px;height:38px;line-height:38px;">宜昌谦谦君...</div>
<div class="a td" style="left:787px;top:191px;width:95px;height:38px;line-height:38px;"><span class="num">50</span></div>
<div class="a td" style="left:883px;top:191px;width:95px;height:38px;line-height:38px;"><span class="num">0</span></div>
<div class="a td" style="left:979px;top:191px;width:95px;height:38px;line-height:38px;"><span class="num">100</span></div>
<div class="a td" style="left:1px;top:229px;width:48px;height:38px;line-height:38px;"><span class="cb"></span></div>
<div class="a td lk" style="left:50px;top:230px;width:180px;height:38px;line-height:38px;"><span class="num">15671078905</span></div>
<div class="a td" style="left:231px;top:230px;width:95px;height:38px;line-height:38px;"><span class="num">!</span></div>
<div class="a td" style="left:327px;top:230px;width:120px;height:38px;line-height:38px;"><span class="num">15671078905</span></div>
<div class="a td" style="left:448px;top:230px;width:95px;height:38px;line-height:38px;">白金卡</div>
<div class="a td" style="left:544px;top:230px;width:50px;height:38px;line-height:38px;">女</div>
<div class="a td" style="left:595px;top:230px;width:95px;height:38px;line-height:38px;"></div>
<div class="a td" style="left:691px;top:230px;width:95px;height:38px;line-height:38px;">宜昌谦谦君...</div>
<div class="a td" style="left:787px;top:230px;width:95px;height:38px;line-height:38px;"><span class="num">0</span></div>
<div class="a td" style="left:883px;top:230px;width:95px;height:38px;line-height:38px;"><span class="num">0</span></div>
<div class="a td" style="left:979px;top:230px;width:95px;height:38px;line-height:38px;"><span class="num">0</span></div>
<div class="a td" style="left:1px;top:268px;width:48px;height:38px;line-height:38px;"><span class="cb"></span></div>
<div class="a td lk" style="left:50px;top:269px;width:180px;height:38px;line-height:38px;"><span class="num">1872871671</span></div>
<div class="a td" style="left:231px;top:269px;width:95px;height:38px;line-height:38px;">颜夕</div>
<div class="a td" style="left:327px;top:269px;width:120px;height:38px;line-height:38px;"></div>
<div class="a td" style="left:448px;top:269px;width:95px;height:38px;line-height:38px;">白金卡</div>
<div class="a td" style="left:544px;top:269px;width:50px;height:38px;line-height:38px;">保密</div>
<div class="a td" style="left:595px;top:269px;width:95px;height:38px;line-height:38px;"></div>
<div class="a td" style="left:691px;top:269px;width:95px;height:38px;line-height:38px;">宜昌谦谦君...</div>
<div class="a td" style="left:787px;top:269px;width:95px;height:38px;line-height:38px;"><span class="num">0</span></div>
<div class="a td" style="left:883px;top:269px;width:95px;height:38px;line-height:38px;"><span class="num">0</span></div>
<div class="a td" style="left:979px;top:269px;width:95px;height:38px;line-height:38px;"><span class="num">0</span></div>
<div class="a td" style="left:1px;top:307px;width:48px;height:38px;line-height:38px;"><span class="cb"></span></div>
<div class="a td lk" style="left:50px;top:308px;width:180px;height:38px;line-height:38px;"><span class="num">27321737121</span></div>
<div class="a td" style="left:231px;top:308px;width:95px;height:38px;line-height:38px;">颜夕</div>
<div class="a td" style="left:327px;top:308px;width:120px;height:38px;line-height:38px;"></div>
<div class="a td" style="left:448px;top:308px;width:95px;height:38px;line-height:38px;">白金卡</div>
<div class="a td" style="left:544px;top:308px;width:50px;height:38px;line-height:38px;">保密</div>
<div class="a td" style="left:595px;top:308px;width:95px;height:38px;line-height:38px;"></div>
<div class="a td" style="left:691px;top:308px;width:95px;height:38px;line-height:38px;">宜昌谦谦君...</div>
<div class="a td" style="left:787px;top:308px;width:95px;height:38px;line-height:38px;"><span class="num">0</span></div>
<div class="a td" style="left:883px;top:308px;width:95px;height:38px;line-height:38px;"><span class="num">0</span></div>
<div class="a td" style="left:979px;top:308px;width:95px;height:38px;line-height:38px;"><span class="num">0</span></div>
<div class="a td" style="left:1px;top:346px;width:48px;height:38px;line-height:38px;"><span class="cb"></span></div>
<div class="a td lk" style="left:50px;top:347px;width:180px;height:38px;line-height:38px;"><span class="num">101010</span></div>
<div class="a td" style="left:231px;top:347px;width:95px;height:38px;line-height:38px;">cs</div>
<div class="a td" style="left:327px;top:347px;width:120px;height:38px;line-height:38px;"></div>
<div class="a td" style="left:448px;top:347px;width:95px;height:38px;line-height:38px;">白金卡</div>
<div class="a td" style="left:544px;top:347px;width:50px;height:38px;line-height:38px;">保密</div>
<div class="a td" style="left:595px;top:347px;width:95px;height:38px;line-height:38px;"></div>
<div class="a td" style="left:691px;top:347px;width:95px;height:38px;line-height:38px;">宜昌谦谦君...</div>
<div class="a td" style="left:787px;top:347px;width:95px;height:38px;line-height:38px;"><span class="num">0</span></div>
<div class="a td" style="left:883px;top:347px;width:95px;height:38px;line-height:38px;"><span class="num">0</span></div>
<div class="a td" style="left:979px;top:347px;width:95px;height:38px;line-height:38px;"><span class="num">0</span></div>
<div class="a td" style="left:1px;top:385px;width:48px;height:49px;line-height:49px;"><span class="cb"></span></div>
<div class="a td lk" style="left:50px;top:386px;width:180px;height:49px;line-height:49px;"><span class="num">123654</span></div>
<div class="a td" style="left:231px;top:385px;width:95px;height:49px;line-height:49px;line-height:normal"><div class="dots"><i style="background:#3dcdbd"></i><i style="background:#f35b31"></i></div><div class="nm"><span class="num">123</span></div></div>
<div class="a td" style="left:327px;top:386px;width:120px;height:49px;line-height:49px;"><span class="num">18805155407</span></div>
<div class="a td" style="left:448px;top:386px;width:95px;height:49px;line-height:49px;">白金卡</div>
<div class="a td" style="left:544px;top:386px;width:50px;height:49px;line-height:49px;">男</div>
<div class="a td" style="left:595px;top:386px;width:95px;height:49px;line-height:49px;"><span class="num">123654</span></div>
<div class="a td" style="left:691px;top:386px;width:95px;height:49px;line-height:49px;">美业万达店</div>
<div class="a td" style="left:787px;top:386px;width:95px;height:49px;line-height:49px;"><span class="num">1180</span></div>
<div class="a td" style="left:883px;top:386px;width:95px;height:49px;line-height:49px;"><span class="num">0</span></div>
<div class="a td" style="left:979px;top:386px;width:95px;height:49px;line-height:49px;"><span class="num">0</span></div></div>

</div>

<div class="a" style="left:1336px;top:104px;width:13px;height:643px;background:#f1f1f1"></div>
<div class="a" style="left:1336px;top:104px;width:13px;height:12px;background:#e9e9e9"></div>
<svg class="a" style="left:1336px;top:104px" width="13" height="12" viewBox="0 0 13 12"><path d="M2.5,8 H10.5 L6.5,3.8 Z" fill="#a3a3a3"/></svg>
<div class="a" style="left:1337px;top:117px;width:10px;height:316px;background:#c1c1c1"></div>
<div class="a" style="left:1336px;top:735px;width:13px;height:12px;background:#e9e9e9"></div>
<svg class="a" style="left:1336px;top:735px" width="13" height="12" viewBox="0 0 13 12"><path d="M2.5,4 H10.5 L6.5,8.2 Z" fill="#111"/></svg>
</body></html>
